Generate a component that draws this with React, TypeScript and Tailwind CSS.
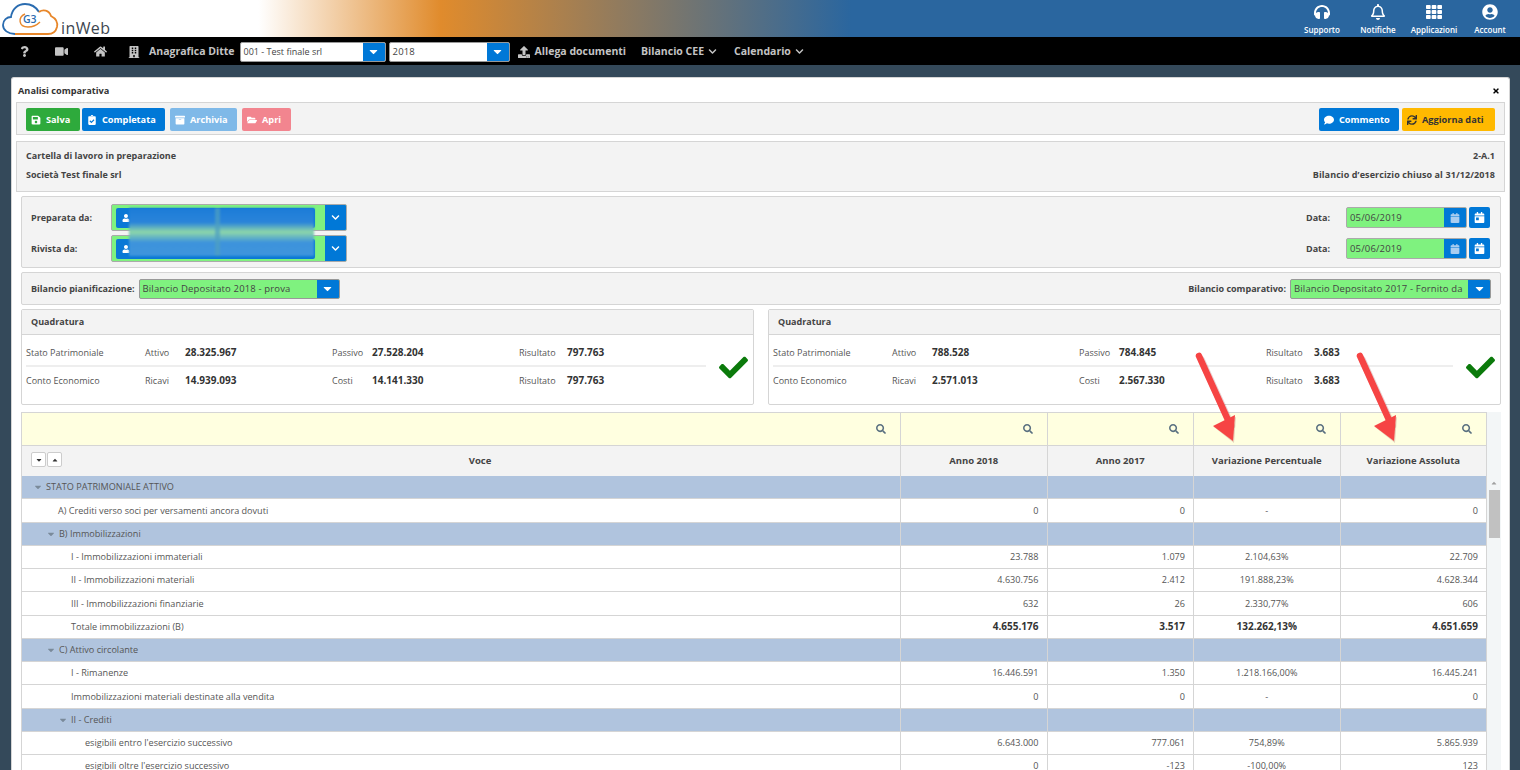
import { ReactNode } from "react";
import {
  FaArchive,
  FaBuilding,
  FaCalendar,
  FaCalendarDay,
  FaCaretDown,
  FaCaretUp,
  FaCheck,
  FaChevronDown,
  FaClipboardCheck,
  FaComment,
  FaFolderOpen,
  FaHeadphones,
  FaHome,
  FaQuestion,
  FaRegBell,
  FaSave,
  FaSearch,
  FaSync,
  FaTh,
  FaTimes,
  FaUpload,
  FaUser,
  FaUserCircle,
  FaVideo,
} from "react-icons/fa";

type Row = {
  label: string;
  indent: string;
  group?: boolean;
  bold?: boolean;
  values?: string[];
};

const rows: Row[] = [
  { label: "STATO PATRIMONIALE ATTIVO", indent: "pl-[11px]", group: true },
  { label: "A) Crediti verso soci per versamenti ancora dovuti", indent: "pl-[36px]", values: ["0", "0", "-", "0"] },
  { label: "B) Immobilizzazioni", indent: "pl-[24px]", group: true },
  { label: "I - Immobilizzazioni immateriali", indent: "pl-[49px]", values: ["23.788", "1.079", "2.104,63%", "22.709"] },
  { label: "II - Immobilizzazioni materiali", indent: "pl-[49px]", values: ["4.630.756", "2.412", "191.888,23%", "4.628.344"] },
  { label: "III - Immobilizzazioni finanziarie", indent: "pl-[49px]", values: ["632", "26", "2.330,77%", "606"] },
  { label: "Totale immobilizzazioni (B)", indent: "pl-[49px]", bold: true, values: ["4.655.176", "3.517", "132.262,13%", "4.651.659"] },
  { label: "C) Attivo circolante", indent: "pl-[24px]", group: true },
  { label: "I - Rimanenze", indent: "pl-[49px]", values: ["16.446.591", "1.350", "1.218.166,00%", "16.445.241"] },
  { label: "Immobilizzazioni materiali destinate alla vendita", indent: "pl-[49px]", values: ["0", "0", "-", "0"] },
  { label: "II - Crediti", indent: "pl-[36px]", group: true },
  { label: "esigibili entro l'esercizio successivo", indent: "pl-[63px]", values: ["6.643.000", "777.061", "754,89%", "5.865.939"] },
  { label: "esigibili oltre l'esercizio successivo", indent: "pl-[63px]", values: ["0", "-123", "-100,00%", "123"] },
];

function TopIcon({ icon, label }: { icon: ReactNode; label: string }) {
  return (
    <div className="flex w-[56px] flex-col items-center">
      <div className="flex h-[24px] items-center text-[16px]">{icon}</div>
      <span className="text-[8px] leading-[11px] font-semibold">{label}</span>
    </div>
  );
}

function Logo() {
  return (
    <div className="relative h-[37px] w-[110px]">
      <svg width="60" height="37" viewBox="0 0 60 37" fill="none" className="absolute top-0 left-0">
        <path
          d="M15 34 C8 34 3 30 3 25 C3 20 7 17 11 17 C12 9 18 4 25 4 C31 4 36 7 39 12"
          stroke="#2a6cb0"
          strokeWidth="1.8"
        />
        <path
          d="M39 12 C43 9 49 10 51 16 C55 18 58 22 57 27 C56 31 53 34 48 34 L15 34"
          stroke="#e8872a"
          strokeWidth="1.8"
        />
        <path d="M25 14 C18 17 18 27 28 27 C33 27 37 25 40 22" stroke="#e8872a" strokeWidth="1.4" />
        <text x="23" y="23" fontSize="10.5" fontWeight="600" fill="#2a6cb0" fontFamily="'Open Sans', sans-serif">
          G3
        </text>
      </svg>
      <span className="absolute top-[18px] left-[61px] text-[16px] leading-[20px] tracking-[0.4px] text-[#3d4650]">
        inWeb
      </span>
    </div>
  );
}

function Select({ value, width, green, valueClass = "text-[9.5px] tracking-[0.15px]" }: { value: string; width: string; green?: boolean; valueClass?: string }) {
  return (
    <div className={`flex h-[20px] overflow-hidden rounded-[2px] border border-[#999] ${width} ${green ? "bg-[#7ff27f]" : "bg-white"}`}>
      <span className={`flex-1 overflow-hidden pl-[3px] leading-[18px] font-normal whitespace-nowrap text-[#444] ${valueClass}`}>
        {value}
      </span>
      <span className="flex w-[22px] shrink-0 items-center justify-center bg-[#0078d7] text-[13px] text-white">
        <FaCaretDown />
      </span>
    </div>
  );
}

function ToolButton({ icon, label, color, text = "text-white" }: { icon: ReactNode; label: string; color: string; text?: string }) {
  return (
    <button className={`flex h-[23px] items-center gap-[5px] rounded-[2px] px-[5px] text-[9.2px] font-bold ${color} ${text}`}>
      <span className="text-[10px]">{icon}</span>
      {label}
    </button>
  );
}

function PersonField({ label }: { label: string }) {
  return (
    <div className="flex items-center">
      <span className="w-[80px] text-[9px] font-bold text-[#444]">{label}</span>
      <div className="flex h-[27px] w-[236px] overflow-hidden rounded-[2px] border border-[#aaa] bg-[#7ff27f]">
        <div className="flex-1 py-[3px] pl-[4px]">
          <div className="flex h-[20px] w-[199px] items-center rounded-[2px] bg-[#0a78d6] pl-[6px] text-[8px] text-white">
            <FaUser />
          </div>
        </div>
        <span className="flex w-[21px] items-center justify-center bg-[#0078d7] text-[9px] text-white">
          <FaChevronDown />
        </span>
      </div>
    </div>
  );
}

function DateField() {
  return (
    <div className="flex items-center">
      <span className="mr-[16px] text-[9px] font-bold text-[#444]">Data:</span>
      <div className="flex h-[21px] w-[121px] overflow-hidden rounded-[2px] border border-[#aaa] bg-[#7ff27f]">
        <span className="flex-1 pl-[3px] text-[9.5px] leading-[19px] tracking-[0.15px] text-[#444]">05/06/2019</span>
        <span className="flex w-[22px] items-center justify-center bg-[#0078d7] text-[10px] text-[#a9cdf0]">
          <FaCalendar />
        </span>
      </div>
      <span className="ml-[2px] flex h-[21px] w-[21px] items-center justify-center rounded-[2px] bg-[#0078d7] text-[11px] text-white">
        <FaCalendarDay />
      </span>
    </div>
  );
}

function Cell({ label, value, width }: { label: string; value: string; width: string }) {
  return (
    <div className={`flex items-center ${width}`}>
      <span className="w-[40px] text-[#555]">{label}</span>
      <span className="text-[10px] font-bold text-[#333]">{value}</span>
    </div>
  );
}

function Quadratura({ data, className }: { data: string[][]; className: string }) {
  return (
    <div className={`rounded-[2px] border border-[#d5d5d5] bg-white ${className}`}>
      <div className="h-[25px] border-b border-[#d5d5d5] bg-[#f3f3f3] pl-[9px] text-[9px] leading-[24px] font-bold text-[#444]">
        Quadratura
      </div>
      <div className="flex items-start">
        <div className="w-[684px] pt-[5px] pl-[4px] text-[9px] text-[#555]">
          {data.map((r, i) => (
            <div key={r[0]} className={`flex h-[27px] items-center ${i === 0 ? "border-b-2 border-[#eee]" : ""}`}>
              <span className="w-[119px]">{r[0]}</span>
              <Cell label={r[1]} value={r[2]} width="w-[187px]" />
              <Cell label={r[3]} value={r[4]} width="w-[187px]" />
              <Cell label="Risultato" value={r[5]} width="w-[150px] gap-[8px]" />
            </div>
          ))}
        </div>
        <div className="ml-[7px] flex flex-1 justify-center pt-[18px] text-[29px] text-[#0b7a0b]">
          <FaCheck />
        </div>
      </div>
    </div>
  );
}

function FilterCell({ width }: { width: string }) {
  return (
    <div className={`flex h-full items-center justify-end border-r border-[#d5d5d5] pr-[14px] text-[10px] text-[#5a7080] ${width}`}>
      <FaSearch />
    </div>
  );
}

function HeadCell({ label, width }: { label: string; width: string }) {
  return (
    <div className={`flex h-full items-center justify-center border-r border-[#d5d5d5] text-[9.5px] font-bold text-[#444] ${width}`}>
      {label}
    </div>
  );
}

function Arrow({ className }: { className: string }) {
  return (
    <svg width="60" height="96" viewBox="0 0 60 96" className={`pointer-events-none absolute ${className}`}>
      <path d="M5 6 L35 72" stroke="#903030" strokeOpacity="0.22" strokeWidth="7" strokeLinecap="round" transform="translate(1.5 2)" />
      <path d="M19 75 L41 65 L39 91 Z" fill="#903030" fillOpacity="0.22" />
      <path d="M4 4 L33 68" stroke="#f64444" strokeWidth="6.5" strokeLinecap="round" />
      <path d="M18 74 L40 63 L38 89 Z" fill="#f64444" />
    </svg>
  );
}

const colWidth = "w-[146.5px]";

export default function App() {
  return (
    <div className="flex h-[770px] w-[1520px] flex-col overflow-hidden bg-[#34495a] font-['Open_Sans',sans-serif]">
      <header className="flex h-[37px] shrink-0 items-start justify-between bg-[linear-gradient(90deg,#fff_0%,#fff_17%,#e08b2c_29%,#2a669f_56%,#2a669f_100%)] text-white">
        <Logo />
        <div className="flex pr-[2px]">
          <TopIcon icon={<FaHeadphones />} label="Supporto" />
          <TopIcon icon={<FaRegBell />} label="Notifiche" />
          <TopIcon icon={<FaTh />} label="Applicazioni" />
          <TopIcon icon={<FaUserCircle />} label="Account" />
        </div>
      </header>

      <nav className="flex h-[28px] shrink-0 items-center bg-black pt-[1px] pl-[19px] text-[10.5px] font-bold text-[#c4c4c4]">
        <FaQuestion className="text-[11px]" />
        <FaVideo className="ml-[25px] text-[13px]" />
        <FaHome className="ml-[26px] text-[13px]" />
        <FaBuilding className="ml-[21px] text-[12px]" />
        <span className="ml-[9px]">Anagrafica Ditte</span>
        <div className="ml-[5px] flex items-center gap-[3px]">
          <Select value="001 - Test finale srl" width="w-[146px]" valueClass="text-[9px]" />
          <Select value="2018" width="w-[121px]" />
        </div>
        <FaUpload className="ml-[8px] text-[12px]" />
        <span className="ml-[5px]">Allega documenti</span>
        <span className="ml-[15px]">Bilancio CEE</span>
        <FaChevronDown className="ml-[4px] text-[9px]" />
        <span className="ml-[17px]">Calendario</span>
        <FaChevronDown className="ml-[4px] text-[9px]" />
      </nav>

      <main className="relative mt-[12px] mr-[10px] ml-[11px] min-h-0 flex-1 rounded-t-[3px] border border-b-0 border-[#d5d5d5] bg-white px-[4px]">
        <div className="flex h-[24px] items-center justify-between px-[2px] pt-[2px] text-[9.2px] text-[#333]">
          <span className="font-bold">Analisi comparativa</span>
          <FaTimes className="mr-[3px] text-[8px] text-black" />
        </div>

        <div className="flex h-[33px] items-center justify-between border border-[#d5d5d5] bg-[#f3f3f3] px-[9px] pt-[2px]">
          <div className="flex gap-[2px]">
            <ToolButton icon={<FaSave />} label="Salva" color="w-[54px] bg-[#2eaa3c]" />
            <ToolButton icon={<FaClipboardCheck />} label="Completata" color="w-[83px] bg-[#0078d7]" />
            <ToolButton icon={<FaArchive />} label="Archivia" color="ml-[3px] w-[67px] bg-[#7fb9e8]" />
            <ToolButton icon={<FaFolderOpen />} label="Apri" color="ml-[3px] w-[49px] bg-[#f2858f]" />
          </div>
          <div className="flex gap-[3px]">
            <ToolButton icon={<FaComment />} label="Commento" color="w-[80px] bg-[#0078d7]" />
            <ToolButton icon={<FaSync />} label="Aggiorna dati" color="w-[93px] bg-[#ffb900]" text="text-[#333]" />
          </div>
        </div>

        <div className="mt-[6px] h-[51px] border border-[#d5d5d5] bg-[#f3f3f3] pt-[4px]">
          <div className="flex h-[19px] items-center justify-between px-[9px] text-[9px] font-bold text-[#444]">
            <span>Cartella di lavoro in preparazione</span>
            <span>2-A.1</span>
          </div>
          <div className="flex h-[19px] items-center justify-between px-[9px] text-[9px] font-bold text-[#444]">
            <span>Società Test finale srl</span>
            <span className="tracking-[0.1px]">Bilancio d’esercizio chiuso al 31/12/2018</span>
          </div>
        </div>

        <div className="bg-white pt-[4px] pr-[4px] pl-[5px]">
          <div className="flex h-[72px] items-center justify-between rounded-[2px] border border-[#d5d5d5] bg-[#f3f3f3] pt-[2px] pr-[10px] pl-[9px]">
            <div className="flex flex-col gap-[4px]">
              <PersonField label="Preparata da:" />
              <PersonField label="Rivista da:" />
            </div>
            <div className="flex flex-col gap-[10px]">
              <DateField />
              <DateField />
            </div>
          </div>

          <div className="mt-[4px] flex h-[33px] items-center justify-between rounded-[2px] border border-[#d5d5d5] bg-[#f3f3f3] px-[9px] text-[9px] font-bold text-[#444]">
            <div className="flex items-center gap-[4px]">
              <span>Bilancio pianificazione:</span>
              <Select value="Bilancio Depositato 2018 - prova" width="w-[201px]" green />
            </div>
            <div className="flex items-center gap-[4px]">
              <span>Bilancio comparativo:</span>
              <Select value="Bilancio Depositato 2017 - Fornito da" width="w-[201px]" green />
            </div>
          </div>

          <div className="mt-[4px] flex justify-between">
            <Quadratura
              className="h-[96px] w-[733px]"
              data={[
                ["Stato Patrimoniale", "Attivo", "28.325.967", "Passivo", "27.528.204", "797.763"],
                ["Conto Economico", "Ricavi", "14.939.093", "Costi", "14.141.330", "797.763"],
              ]}
            />
            <Quadratura
              className="h-[96px] w-[733px]"
              data={[
                ["Stato Patrimoniale", "Attivo", "788.528", "Passivo", "784.845", "3.683"],
                ["Conto Economico", "Ricavi", "2.571.013", "Costi", "2.567.330", "3.683"],
              ]}
            />
          </div>

          <div className="relative mt-[7px] flex w-full">
            <div className="w-[1466px] border-t border-l border-[#d5d5d5]">
              <div className="flex h-[33px] border-b border-[#d5d5d5] bg-[#ffffe0]">
                <FilterCell width="flex-1" />
                <FilterCell width={colWidth} />
                <FilterCell width={colWidth} />
                <FilterCell width={colWidth} />
                <FilterCell width={colWidth} />
              </div>
              <div className="relative flex h-[30px] bg-[#f3f3f3]">
                <div className="absolute top-[6px] left-[9px] flex gap-[1px]">
                  <span className="flex h-[15px] w-[15px] items-center justify-center rounded-[2px] border border-[#ccc] bg-white text-[8px] text-[#333]">
                    <FaCaretDown />
                  </span>
                  <span className="flex h-[15px] w-[15px] items-center justify-center rounded-[2px] border border-[#ccc] bg-white text-[8px] text-[#333]">
                    <FaCaretUp />
                  </span>
                </div>
                <HeadCell label="Voce" width="flex-1 pl-[38px]" />
                <HeadCell label="Anno 2018" width={colWidth} />
                <HeadCell label="Anno 2017" width={colWidth} />
                <HeadCell label="Variazione Percentuale" width={colWidth} />
                <HeadCell label="Variazione Assoluta" width={colWidth} />
              </div>
              {rows.map((row) => (
                <div
                  key={row.label}
                  className={`flex h-[23.25px] border-b border-[#d5d5d5] ${row.bold ? "text-[10px] font-bold text-[#333]" : "text-[9.1px] text-[#555]"} ${row.group ? "bg-[#b0c4de]" : "bg-white"}`}
                >
                  <div className={`flex flex-1 items-center border-r border-[#d5d5d5] ${row.indent} text-[9.1px] font-normal text-[#555]`}>
                    {row.group && <FaCaretDown className="mr-[3px] text-[10px] text-[#7a8a9a]" />}
                    {row.label}
                  </div>
                  {[0, 1, 2, 3].map((c) => (
                    <div
                      key={c}
                      className={`flex ${colWidth} items-center border-r border-[#d5d5d5] ${c === 2 ? "justify-center" : "justify-end pr-[8px]"}`}
                    >
                      {row.values?.[c]}
                    </div>
                  ))}
                </div>
              ))}
            </div>
            <div className="flex w-[14px] flex-col items-center bg-[#f3f6f7] pt-[67px]">
              <FaCaretUp className="text-[8px] text-[#a0a0a0]" />
              <div className="mt-[3px] h-[48px] w-[11px] bg-[#c1c1c1]" />
            </div>

            <Arrow className="top-[-60px] left-[1174px]" />
            <Arrow className="top-[-60px] left-[1335px]" />
          </div>
        </div>

        {/* blurred-out names, over both person fields */}
        <div className="absolute top-[130px] left-[117px] h-[48px] w-[185px] bg-[linear-gradient(180deg,#1c7cd8_0%,#2a84da_30%,#8ed7aa_50%,#3d93dc_72%,#3f95dd_100%)] blur-[1px]">
          <div className="ml-[86px] h-full w-[5px] bg-[#4fa0c0]/70" />
        </div>
      </main>
    </div>
  );
}
